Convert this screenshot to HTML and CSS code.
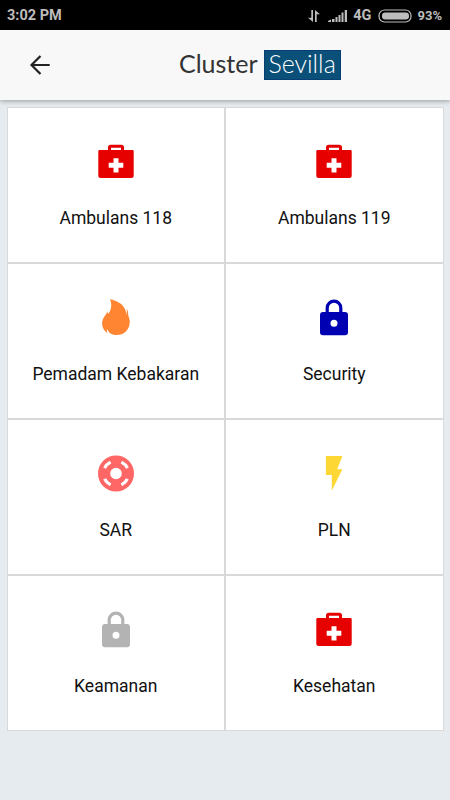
FILE: index.html
```html
<!DOCTYPE html>
<html lang="id">
<head>
    <meta charset="UTF-8">
    <meta name="viewport" content="width=device-width, initial-scale=1.0">
    <title>Cluster Sevilla</title>
    <link rel="stylesheet" href="styles.css">
</head>
<body>

    <!-- Shared icons -->
    <svg class="icon-defs">
        <symbol id="medkit" viewBox="0 0 40 40">
            <path fill-rule="evenodd" d="M12 9V6.5Q12 3.7 14.8 3.7H25.2Q28 3.7 28 6.5V9H36.5Q37.7 9 37.7 10.2V34.5Q37.7 37 35.2 37H4.8Q2.3 37 2.3 34.5V10.2Q2.3 9 3.5 9ZM15 9H25V6.7H15ZM17.5 17.2V21.8H12.7V26.8H17.5V31.4H22.5V26.8H27.3V21.8H22.5V17.2Z"/>
        </symbol>
        <symbol id="lock" viewBox="0 0 40 40">
            <path fill="none" stroke="currentColor" stroke-width="3.2" d="M13.2 16V10.9A6.8 6.8 0 0 1 26.8 10.9V16"/>
            <path fill-rule="evenodd" d="M9 15H31Q34 15 34 18V35.3Q34 38.3 31 38.3H9Q6 38.3 6 35.3V18Q6 15 9 15ZM20 22.8A3.5 3.5 0 1 0 20 29.8A3.5 3.5 0 1 0 20 22.8Z"/>
        </symbol>
    </svg>

    <!-- Status Bar -->
    <div class="status-bar">
        <span class="time">3:02 PM</span>
        <div class="status-right">
            <svg class="arrows" viewBox="0 0 14 14" width="14" height="14">
                <path d="M4.3 1H6V13L1 8.8H4.3ZM8 13V1L13 5.2H9.7V13Z"/>
            </svg>
            <svg class="signal" viewBox="0 0 20 14" width="20" height="14">
                <path d="M0 13V12L3 10.5V13ZM4 13V10H6.5V13ZM7.5 13V8H9.5V13ZM10.5 13V6H12.5V13ZM13.5 13V3.5H15.5V13ZM16.7 13V1H19V13Z"/>
            </svg>
            <span class="network">4G</span>
            <svg class="battery" viewBox="0 0 34 14" width="34" height="14">
                <rect x="1" y="1" width="32" height="12" rx="5.5" fill="none" stroke="#bdbdbd" stroke-width="1.2"/>
                <rect x="4" y="3.5" width="27" height="7" rx="3.2"/>
            </svg>
            <span class="percent">93%</span>
        </div>
    </div>

    <!-- Header -->
    <header class="header">
        <svg class="back" viewBox="0 0 22 22" width="22" height="22">
            <path d="M20.7 11H2.5M11.5 2L2.5 11L11.5 20"/>
        </svg>
        <h1 class="title">Cluster <span class="badge">Sevilla</span></h1>
    </header>

    <!-- Emergency Contacts -->
    <main class="grid">
        <div class="cell">
            <svg class="icon red"><use href="#medkit"/></svg>
            <p class="label">Ambulans 118</p>
        </div>
        <div class="cell">
            <svg class="icon red"><use href="#medkit"/></svg>
            <p class="label">Ambulans 119</p>
        </div>
        <div class="cell">
            <svg class="icon orange" viewBox="0 0 40 40">
                <path d="M14 2.3C20 3.5 30.5 7.5 30.3 18C31 15.5 31 13.5 30.7 11.5C32.4 13.5 31.8 17 32.6 19.5C33.6 22.5 34 24 33.7 26C33 33.5 28 38 20.5 38C16.5 38 13 36.5 11 32C10.6 33.5 10.8 35 11.8 36.2C7.5 33.5 5.8 29.5 6.2 25C6.8 20 11 17.5 11 14.5C11.5 15.2 12 16 12 17C15 14 16.5 8 14 2.3Z"/>
            </svg>
            <p class="label">Pemadam Kebakaran</p>
        </div>
        <div class="cell">
            <svg class="icon blue"><use href="#lock"/></svg>
            <p class="label">Security</p>
        </div>
        <div class="cell">
            <svg class="icon coral" viewBox="0 0 40 40">
                <circle cx="20" cy="20.5" r="18"/>
                <circle cx="20" cy="20.5" r="5.8" fill="#fff"/>
                <g fill="none" stroke="#fff" stroke-width="3.2">
                    <path d="M14.6 9.1A12.6 12.6 0 0 0 8.6 15.1"/>
                    <path d="M25.4 9.1A12.6 12.6 0 0 1 31.4 15.1"/>
                    <path d="M14.6 31.9A12.6 12.6 0 0 1 8.6 25.9"/>
                    <path d="M25.4 31.9A12.6 12.6 0 0 0 31.4 25.9"/>
                </g>
            </svg>
            <p class="label">SAR</p>
        </div>
        <div class="cell">
            <svg class="icon yellow" viewBox="0 0 40 40">
                <path d="M11.9 3H28.4L23.2 16.3H28.4L17.8 37.7V22H11.9Z"/>
            </svg>
            <p class="label">PLN</p>
        </div>
        <div class="cell">
            <svg class="icon gray"><use href="#lock"/></svg>
            <p class="label">Keamanan</p>
        </div>
        <div class="cell">
            <svg class="icon red"><use href="#medkit"/></svg>
            <p class="label">Kesehatan</p>
        </div>
    </main>

</body>
</html>
```
FILE: styles.css
```css
* {
    box-sizing: border-box;
}

body {
    margin: 0;
    min-height: 800px;
    font-family: Roboto, sans-serif;
    background-color: #e5ebee;
}

.icon-defs {
    display: none;
}

.status-bar {
    display: flex;
    justify-content: space-between;
    align-items: center;
    height: 30px;
    padding: 1px 8px 0 7px;
    background-color: #000;
    color: #bdbdbd;
    fill: #bdbdbd;
    font-weight: bold;
    font-size: 14.5px;
}

.status-right {
    display: flex;
    align-items: center;
}

.signal {
    margin-left: 7px;
}

.network {
    margin-left: 5px;
}

.battery {
    margin-left: 7px;
}

.percent {
    margin-left: 5px;
    font-size: 13px;
}

.header {
    display: flex;
    align-items: center;
    height: 70px;
    padding-left: 29px;
    background-color: #f8f8f8;
    box-shadow: 0 1px 5px rgba(0, 0, 0, 0.35);
}

.back {
    fill: none;
    stroke: #222;
    stroke-width: 2.2;
}

.title {
    display: flex;
    height: 30px;
    margin: 0 0 0 128px;
    font-family: Lato, sans-serif;
    font-size: 25px;
    font-weight: normal;
    line-height: 26px;
    color: #333;
}

.badge {
    width: 77px;
    height: 30px;
    margin-left: 6px;
    text-align: center;
    font-weight: 300;
    color: #fff;
    background-color: #0b5078;
    border: 1px solid #073f75;
    line-height: 24px;
}

.grid {
    display: grid;
    grid-template-columns: 1fr 1fr;
    grid-auto-rows: 156px;
    width: 437px;
    margin: 7px 0 0 6.5px;
}

.cell {
    display: flex;
    flex-direction: column;
    align-items: center;
    padding-top: 33px;
    background-color: #fff;
    border: 1px solid #d9d9d9;
}

.icon {
    width: 40px;
    height: 40px;
    fill: currentColor;
}

.label {
    margin: 27px 0 0;
    font-size: 17.5px;
    line-height: 21px;
    color: #111;
}

.red {
    color: #e60000;
}

.orange {
    color: #ff8533;
}

.blue {
    color: #0000b3;
}

.coral {
    color: #ff6666;
}

.yellow {
    color: #fdd835;
}

.gray {
    color: #b3b3b3;
}
```
